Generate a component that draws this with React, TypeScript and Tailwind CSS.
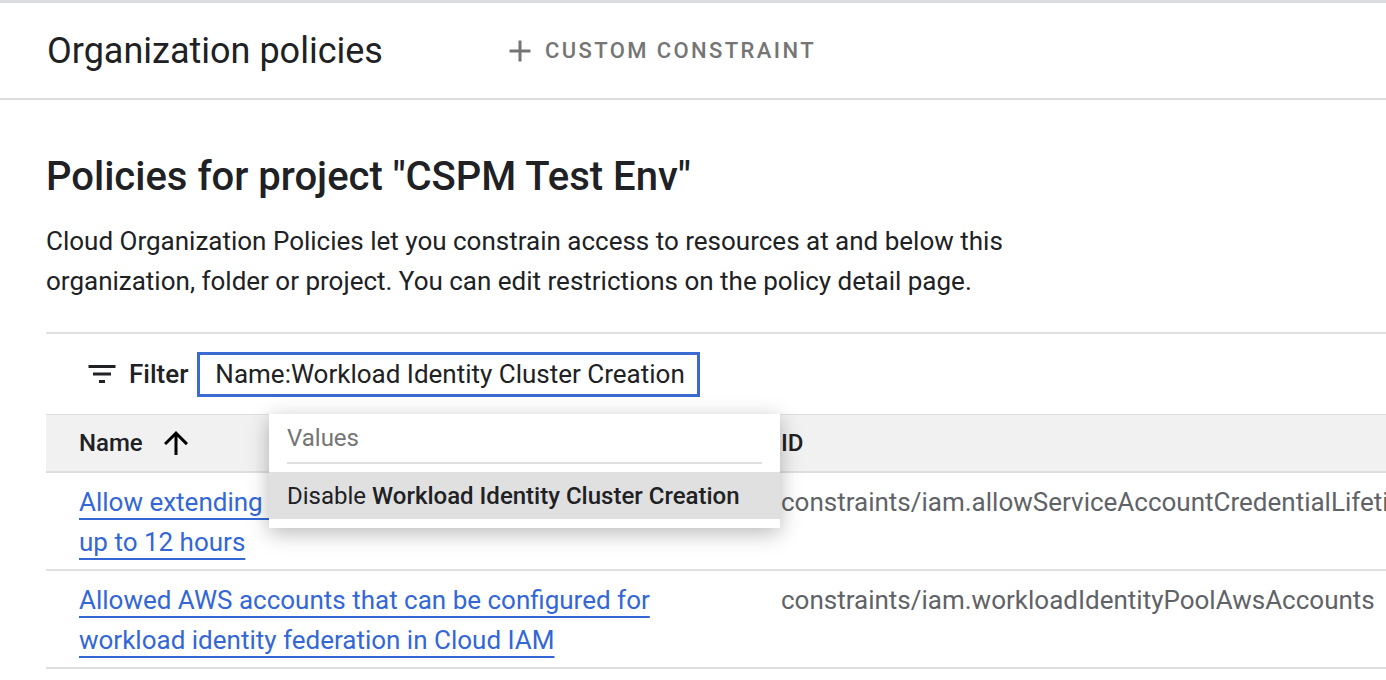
import React from 'react';

const FilterIcon = () => (
  <svg width="36" height="36" viewBox="0 0 24 24" fill="#202124">
    <path d="M10 18h4v-2h-4v2zM3 6v2h18V6H3zm3 7h12v-2H6v2z" />
  </svg>
);

const ArrowUp = () => (
  <svg width="36" height="36" viewBox="0 0 24 24" fill="#000">
    <path d="M4 12l1.41 1.41L11 7.83V20h2V7.83l5.58 5.59L20 12l-8-8-8 8z" />
  </svg>
);

const PlusIcon = () => (
  <svg width="36" height="36" viewBox="0 0 24 24" fill="#757575">
    <path d="M19 13h-6v6h-2v-6H5v-2h6V5h2v6h6v2z" />
  </svg>
);

interface Policy {
  lines: string[];
  id: string;
}

const POLICIES: Policy[] = [
  {
    lines: ['Allow extending lifetime of OAuth 2.0 access tokens to', 'up to 12 hours'],
    id: 'constraints/iam.allowServiceAccountCredentialLifetimeExtension',
  },
  {
    lines: ['Allowed AWS accounts that can be configured for', 'workload identity federation in Cloud IAM'],
    id: 'constraints/iam.workloadIdentityPoolAwsAccounts',
  },
];

export default function App() {
  return (
    <div
      className="w-[1386px] h-[680px] overflow-hidden bg-white text-[#202124] border-t-[3px] border-[#dadce0]"
      style={{ fontFamily: 'Roboto, "Liberation Sans", sans-serif' }}
    >
      {/* Header */}
      <header className="h-[97px] flex items-center px-[47px] border-b-2 border-[#dadce0]">
        <h2 className="text-[36px] font-normal text-[#202124] whitespace-nowrap">Organization policies</h2>
        <button className="ml-[119px] flex items-center gap-[7px] text-[#757575]">
          <PlusIcon />
          <span className="text-[22px] font-medium uppercase tracking-[2.4px] whitespace-nowrap">Custom constraint</span>
        </button>
      </header>

      <main className="pl-[46px]">
        <h1 className="mt-[55px] text-[40px] leading-[44px] font-medium text-[#202124] whitespace-nowrap">
          Policies for project "CSPM Test Env"
        </h1>
        <p className="mt-[22px] w-[1010px] text-[26px] leading-[40px] text-[#202124]">
          Cloud Organization Policies let you constrain access to resources at and below this organization, folder or
          project. You can edit restrictions on the policy detail page.
        </p>

        <div className="mt-[31px] border-t-2 border-[#e0e0e0]">
          {/* Filter bar */}
          <div className="h-[80px] flex items-center pl-[38px]">
            <FilterIcon />
            <span className="ml-[9px] text-[26px] font-medium text-[#202124]">Filter</span>
            <div className="ml-[9px] h-[45px] w-[503px] border-[3px] border-[#3b6bd2] flex items-center pl-[15px] text-[26px] text-[#202124] whitespace-nowrap">
              Name:Workload Identity Cluster Creation
            </div>
          </div>

          {/* Table */}
          <div className="relative">
            <div className="grid grid-cols-[703px_1fr] h-[59px] bg-[#f1f1f1] border-t border-b-2 border-[#dedede] items-center">
              <div className="pl-[33px] flex items-center gap-[15px] text-[24px] font-medium text-[#202124]">
                <span>Name</span>
                <ArrowUp />
              </div>
              <div className="pl-[32px] text-[24px] font-medium text-[#202124]">ID</div>
            </div>

            {POLICIES.map((p) => (
              <div key={p.id} className="grid grid-cols-[703px_1fr] border-b-2 border-[#e0e0e0] pt-[9px] pb-[7px]">
                <div className="pl-[33px] text-[26px] leading-[40px] whitespace-nowrap">
                  <a
                    href="#"
                    className="text-[#3367d6] underline decoration-2 underline-offset-[7px] decoration-[#3367d6]"
                  >
                    {p.lines[0]}
                    <br />
                    {p.lines[1]}
                  </a>
                </div>
                <div className="pl-[32px] text-[26px] leading-[40px] text-[#5f6368] whitespace-nowrap">{p.id}</div>
              </div>
            ))}

            {/* Autocomplete dropdown */}
            <div className="absolute left-[223px] top-0 w-[511px] h-[114px] bg-white shadow-[0_5px_20px_rgba(0,0,0,0.28)] flex flex-col">
              <div className="px-[18px]">
                <div className="h-[50px] flex items-center text-[24px] text-[#757575] border-b-2 border-[#e0e0e0]">
                  Values
                </div>
              </div>
              <div className="mt-[8px] h-[47px] bg-[#e0e0e0] flex items-center px-[18px] text-[24px] text-[#202124] whitespace-nowrap">
                Disable&nbsp;<span className="font-medium">Workload Identity Cluster Creation</span>
              </div>
            </div>
          </div>
        </div>
      </main>
    </div>
  );
}
